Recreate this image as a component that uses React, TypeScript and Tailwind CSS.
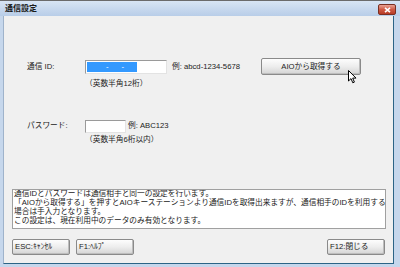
import React from "react";

function Btn({ children, className = "" }: { children: React.ReactNode; className?: string }) {
  return (
    <div
      className={
        "flex items-center rounded-[2px] border border-[#8a8a8a] bg-gradient-to-b from-[#fdfdfd] via-[#ededed] to-[#d4d4d4] text-[7.7px] leading-none text-[#222] shadow-[inset_-1px_-1px_0_#bdbdbd] " +
        className
      }
    >
      {children}
    </div>
  );
}

export default function App() {
  return (
    <div className="relative flex h-[267px] w-[400px] flex-col overflow-hidden border-t border-[#6b6b6b] bg-[#c6d7ec] font-['Liberation_Sans','Noto_Sans_CJK_JP',sans-serif] text-[#222]">
      {/* title bar */}
      <div className="flex h-[15px] shrink-0 items-center justify-between bg-gradient-to-b from-[#d8e5f4] to-[#b8cde8] pl-[5px] pr-[4px]">
        <span className="text-[8px] font-bold leading-none text-[#1b1b1b]">通信設定</span>
        <div className="mt-[2px] flex h-[11px] w-[18px] items-center justify-center rounded-[2px] border border-[#7a2f22] bg-gradient-to-b from-[#e7a193] via-[#d05a44] to-[#b73a24]">
          <svg width="7" height="6" viewBox="0 0 7 6">
            <path d="M1 0.8 L6 5.2 M6 0.8 L1 5.2" stroke="#fff" strokeWidth="1.6" />
          </svg>
        </div>
      </div>

      {/* body */}
      <div className="mb-[3px] ml-[3px] mr-[6px] flex flex-1 flex-col border-b border-l border-r border-b-[#2c6486] border-l-[#9fb3cb] border-r-[#2c6486] bg-[#f0f0f0] pl-[8px] pt-[42px]">
        <div className="pl-[15px]">
          {/* row 1 */}
          <div className="flex h-[17px] items-center text-[7.7px] leading-none">
            <span className="w-[58px]">通信 ID:</span>
            <div className="flex h-[14px] w-[82px] items-center border border-[#9a9a9a] border-b-[#e3e3e3] border-r-[#e3e3e3] bg-white pl-[1px]">
              <div className="flex h-[10px] w-[50px] items-center bg-[#3399ff] text-white">
                <span className="ml-[19px]">-</span>
                <span className="ml-[13px]">-</span>
              </div>
            </div>
            <span className="ml-[5px] w-[89px] whitespace-nowrap">例: abcd-1234-5678</span>
            <Btn className="h-[17px] w-[100px] justify-center">AIOから取得する</Btn>
          </div>
          <div className="mt-[4px] h-[10px] whitespace-nowrap pl-[58px] text-[7.7px] leading-[10px]">（英数半角12桁）</div>

          {/* row 2 */}
          <div className="mt-[30px] flex h-[14px] items-center text-[7.7px] leading-none">
            <span className="w-[58px]">パスワード:</span>
            <div className="h-[13px] w-[41px] border border-[#9a9a9a] border-b-[#e3e3e3] border-r-[#e3e3e3] bg-white" />
            <span className="ml-[2px] whitespace-nowrap">例: ABC123</span>
          </div>
          <div className="mt-[2px] h-[10px] whitespace-nowrap pl-[58px] text-[7.7px] leading-[10px]">（英数半角6桁以内）</div>
        </div>

        {/* info box */}
        <div className="mt-[44px] h-[40px] w-[374px] overflow-hidden border border-[#a0a0a0] bg-white pl-[1px] text-[7.7px] leading-[9px]">
          <div className="-mt-[1px] whitespace-nowrap">
            <div>通信IDとパスワードは通信相手と同一の設定を行います。</div>
            <div>「AIOから取得する」を押すとAIOキーステーションより通信IDを取得出来ますが、通信相手のIDを利用する</div>
            <div>場合は手入力となります。</div>
            <div>この設定は、現在利用中のデータのみ有効となります。</div>
          </div>
        </div>

        {/* buttons */}
        <div className="mt-[10px] flex h-[16px] w-[374px]">
          <Btn className="h-[16px] w-[58px] pl-[2px]">ESC:ｷｬﾝｾﾙ</Btn>
          <Btn className="ml-[6px] h-[16px] w-[58px] pl-[2px]">F1:ﾍﾙﾌﾟ</Btn>
          <Btn className="ml-auto mr-[1px] h-[16px] w-[58px] pl-[2px]">F12:閉じる</Btn>
        </div>
      </div>

      {/* mouse cursor */}
      <svg className="absolute left-[348px] top-[69px]" width="9" height="14" viewBox="0 0 9 14">
        <path d="M0.5 0.5 L0.5 11 L3 8.6 L4.8 12.8 L6.4 12.1 L4.7 8.1 L8 8.1 Z" fill="#fff" stroke="#000" strokeWidth="1" strokeLinejoin="round" />
      </svg>
    </div>
  );
}
